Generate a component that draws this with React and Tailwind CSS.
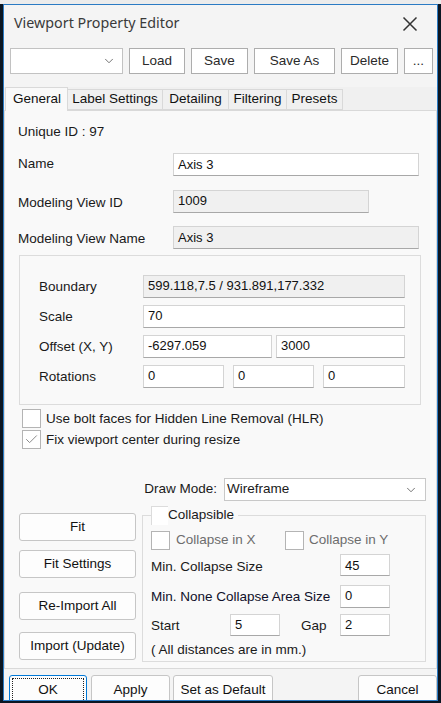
import { ChevronDown, Check } from 'lucide-react';

const font = "font-['Liberation_Sans',Arial,sans-serif]";

function TextBox({ value, w, gray, h = 'h-[23px]' }) {
  return (
    <div
      className={`${w} ${h} flex items-center px-[4px] text-[13px] text-[#111] border border-[#d4d4d4] border-b-[#a8a8a8] shrink-0 ${
        gray ? 'bg-[#f0f0f0]' : 'bg-white'
      }`}
    >
      {value}
    </div>
  );
}

function Box({ checked }) {
  return (
    <div className="w-[19px] h-[19px] border border-[#b4b4b4] bg-white flex items-center justify-center shrink-0">
      {checked ? <Check size={15} strokeWidth={1.6} className="text-[#8a8a8a]" /> : null}
    </div>
  );
}

function ToolButton({ children, w }) {
  return (
    <button className={`${w} h-[26px] bg-white border border-[#adadad] text-[13.5px] text-[#2a2a2a] shrink-0`}>
      {children}
    </button>
  );
}

function SideButton({ children, mt }) {
  return (
    <button
      className={`${mt} w-[117px] h-[28px] bg-[#fdfdfd] border border-[#c6c6c6] rounded-[3px] text-[13.5px] text-[#111]`}
    >
      {children}
    </button>
  );
}

function Tab({ children, w, active }) {
  return active ? (
    <div
      className={`${w} h-[24px] -mb-[1px] relative z-10 bg-[#f9f9f9] border border-[#d9d9d9] border-b-0 flex items-center pl-[7px] text-[13.5px] text-[#111]`}
    >
      {children}
    </div>
  ) : (
    <div
      className={`${w} h-[21px] mt-[2px] bg-[#f0f0f0] border border-[#d9d9d9] border-l-0 flex items-center justify-center text-[13.5px] text-[#111]`}
    >
      {children}
    </div>
  );
}

export default function App() {
  return (
    <div className={`${font} w-[441px] h-[703px] overflow-hidden bg-[#0b1622] relative`}>
      <div className="h-[4px] bg-[#ececec]" />
      <div className="ml-[3px] w-[435px] h-[697px] overflow-hidden bg-[#f4f4f4] border border-[#2b7bc4] flex flex-col">
        {/* title bar */}
        <div className="h-[36px] flex items-center justify-between pl-[10px] pr-[19px] shrink-0">
          <span className="font-['Noto_Sans',sans-serif] text-[14.3px] text-[#3a3a3a]">Viewport Property Editor</span>
          <svg width="16" height="16" viewBox="0 0 16 16" className="mt-[1px]">
            <path d="M1.5 1.5 L14.5 14.5 M14.5 1.5 L1.5 14.5" stroke="#333" strokeWidth="1.5" fill="none" />
          </svg>
        </div>

        {/* toolbar */}
        <div className="mt-[7px] pl-[6px] flex items-center gap-[6px]">
          <div className="w-[113px] h-[26px] bg-white border border-[#c2c2c2] flex items-center justify-end pr-[6px]">
            <ChevronDown size={14} strokeWidth={1.4} className="text-[#555]" />
          </div>
          <ToolButton w="w-[56px]">Load</ToolButton>
          <ToolButton w="w-[57px]">Save</ToolButton>
          <ToolButton w="w-[81px]">Save As</ToolButton>
          <ToolButton w="w-[57px]">Delete</ToolButton>
          <ToolButton w="w-[29px]">...</ToolButton>
        </div>

        {/* tabs */}
        <div className="mt-[13px] bg-[#f0f0f0] flex flex-col">
          <div className="flex pl-[1px]">
            <Tab w="w-[63px]" active>
              General
            </Tab>
            <Tab w="w-[95px]">Label Settings</Tab>
            <Tab w="w-[66px]">Detailing</Tab>
            <Tab w="w-[58px]">Filtering</Tab>
            <Tab w="w-[56px]">Presets</Tab>
          </div>

          {/* tab pane */}
          <div className="h-[559px] bg-[#f9f9f9] border border-[#d9d9d9] pl-[14px] pt-[13px] text-[13.5px] text-[#1a1a1a]">
            <div className="h-[16px] leading-[16px] -ml-[1px]">Unique ID : 97</div>

            <div className="mt-[13px] flex items-center">
              <span className="w-[155px] -ml-[1px]">Name</span>
              <TextBox value="Axis 3" w="w-[246px]" />
            </div>
            <div className="mt-[13px] flex items-center">
              <span className="w-[155px] -ml-[1px] pt-[4px]">Modeling View ID</span>
              <TextBox value="1009" w="w-[196px]" gray />
            </div>
            <div className="mt-[13px] flex items-center">
              <span className="w-[155px] -ml-[1px] pt-[3px]">Modeling View Name</span>
              <TextBox value="Axis 3" w="w-[246px]" gray />
            </div>

            {/* view group */}
            <div className="mt-[5px] w-[402px] h-[150px] border border-[#dcdcdc] pl-[19px] pt-[19px] flex flex-col gap-[7px]">
              <div className="flex items-center">
                <span className="w-[104px] pt-[2px]">Boundary</span>
                <TextBox value="599.118,7.5 / 931.891,177.332" w="w-[262px]" gray />
              </div>
              <div className="flex items-center">
                <span className="w-[104px] pt-[2px]">Scale</span>
                <TextBox value="70" w="w-[262px]" />
              </div>
              <div className="flex items-center">
                <span className="w-[104px] pt-[2px]">Offset (X, Y)</span>
                <div className="flex gap-[4px]">
                  <TextBox value="-6297.059" w="w-[129px]" />
                  <TextBox value="3000" w="w-[129px]" />
                </div>
              </div>
              <div className="flex items-center">
                <span className="w-[104px] pt-[2px]">Rotations</span>
                <div className="flex gap-[9px]">
                  <TextBox value="0" w="w-[81px]" />
                  <TextBox value="0" w="w-[81px]" />
                  <TextBox value="0" w="w-[82px]" />
                </div>
              </div>
            </div>

            {/* checkboxes */}
            <div className="mt-[4px] ml-[3px] flex flex-col gap-[1px]">
              <div className="flex items-center gap-[5px]">
                <Box />
                <span>Use bolt faces for Hidden Line Removal (HLR)</span>
              </div>
              <div className="flex items-center gap-[5px]">
                <Box checked />
                <span>Fix viewport center during resize</span>
              </div>
            </div>

            {/* draw mode */}
            <div className="mt-[28px] flex items-center justify-end pr-[10px] gap-[7px]">
              <span>Draw Mode:</span>
              <div className="w-[202px] h-[23px] bg-white border border-[#c8c8c8] flex items-center justify-between pl-[2px] pr-[7px]">
                <span>Wireframe</span>
                <ChevronDown size={14} strokeWidth={1.4} className="text-[#555]" />
              </div>
            </div>

            {/* lower area */}
            <div className="mt-[12px] flex">
              <div className="flex flex-col">
                <SideButton mt="mt-0">Fit</SideButton>
                <SideButton mt="mt-[9px]">Fit Settings</SideButton>
                <SideButton mt="mt-[14px]">Re-Import All</SideButton>
                <SideButton mt="mt-[12px]">Import (Update)</SideButton>
              </div>

              <div className="relative ml-[6px] mt-[2px] w-[284px] h-[147px] border border-[#dcdcdc] pl-[8px] pt-[14px]">
                <div className="absolute -top-[11px] left-[8px] flex items-center bg-[#f9f9f9] pr-[4px]">
                  <div className="w-[17px] h-[19px] bg-white border-t border-l border-[#dcdcdc]" />
                  <span>Collapsible</span>
                </div>

                <div className="flex items-center text-[#6d6d6d]">
                  <Box />
                  <span className="ml-[6px] w-[109px]">Collapse in X</span>
                  <Box />
                  <span className="ml-[5px]">Collapse in Y</span>
                </div>
                <div className="mt-[3px] flex items-center">
                  <span className="w-[189px] pt-[4px]">Min. Collapse Size</span>
                  <TextBox value="45" w="w-[50px]" h="h-[22px]" />
                </div>
                <div className="mt-[7px] flex items-center">
                  <span className="w-[189px] pt-[2px] text-[#10102a]">Min. None Collapse Area Size</span>
                  <TextBox value="0" w="w-[50px]" h="h-[23px]" />
                </div>
                <div className="mt-[6px] flex items-center">
                  <span className="w-[79px] pt-[2px]">Start</span>
                  <TextBox value="5" w="w-[50px]" h="h-[22px]" />
                  <span className="ml-[21px] w-[39px] pt-[2px]">Gap</span>
                  <TextBox value="2" w="w-[50px]" h="h-[22px]" />
                </div>
                <div className="mt-[4px]">( All distances are in mm.)</div>
              </div>
            </div>
          </div>
        </div>

        {/* dialog buttons */}
        <div className="mt-[6px] pl-[5px] flex text-[13.5px] text-[#111]">
          <button className="w-[78px] h-[30px] bg-[#fdfdfd] border border-[#0078d7] rounded-t-[3px] p-[2px]">
            <div className="w-full h-full border border-dotted border-[#222] flex items-center justify-center">OK</div>
          </button>
          <button className="ml-[4px] w-[79px] h-[30px] bg-[#fdfdfd] border border-[#c6c6c6] rounded-t-[3px]">Apply</button>
          <button className="ml-[3px] w-[100px] h-[30px] bg-[#fdfdfd] border border-[#c6c6c6] rounded-t-[3px]">
            Set as Default
          </button>
          <button className="ml-auto w-[79px] h-[30px] bg-[#fdfdfd] border border-[#c6c6c6] rounded-t-[3px]">Cancel</button>
        </div>
      </div>
    </div>
  );
}
